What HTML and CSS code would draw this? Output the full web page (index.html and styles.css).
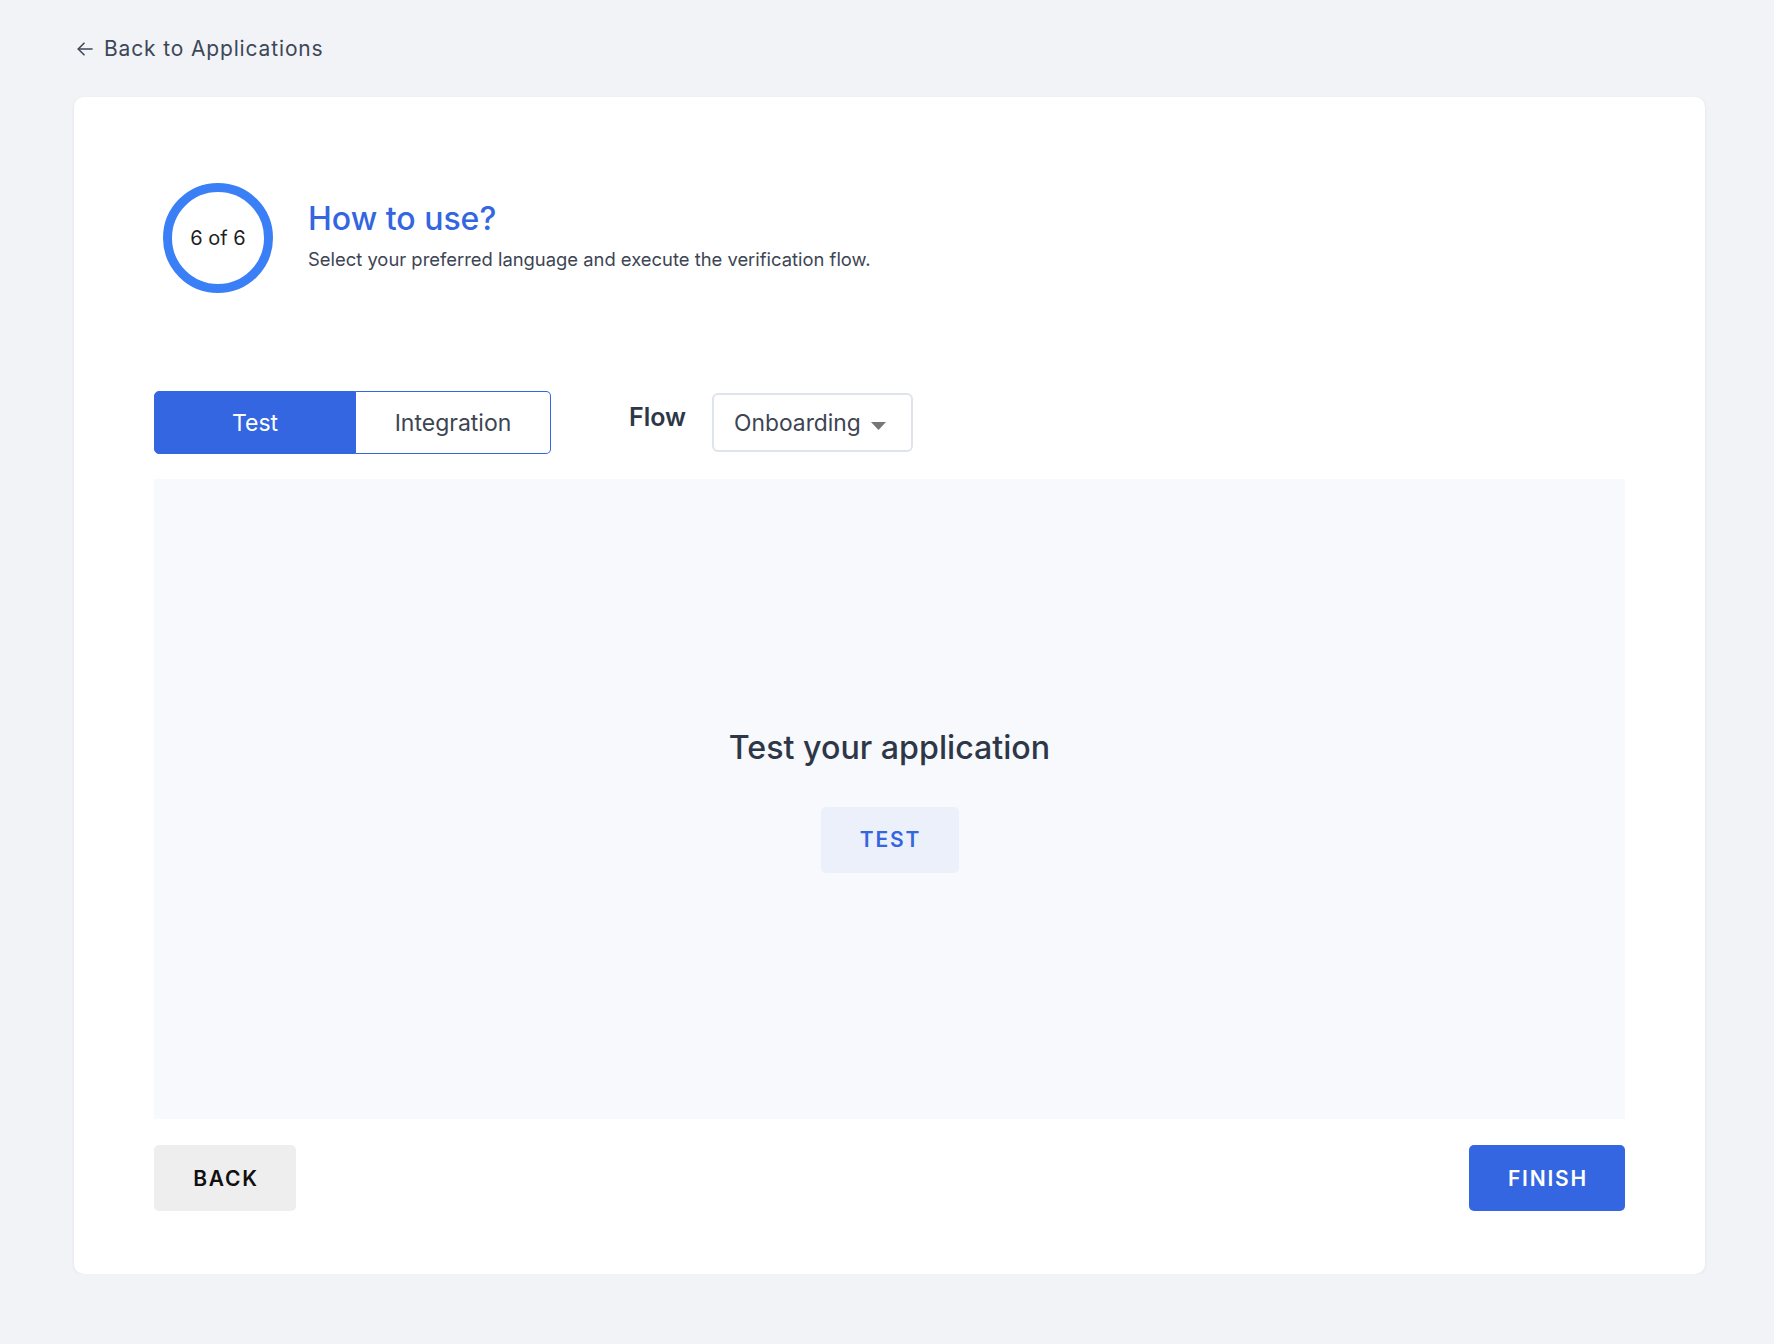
FILE: index.html
```html
<!DOCTYPE html>
<html lang="en">
<head>
<meta charset="utf-8">
<title>How to use?</title>
<link rel="stylesheet" href="styles.css">
</head>
<body>
<div class="page">
  <a class="back-link" href="#">
    <svg class="back-arrow" width="16" height="14" viewBox="0 0 16 14" fill="none" stroke="currentColor" stroke-width="1.6" stroke-linecap="round" stroke-linejoin="round"><path d="M15 7H1.5"/><path d="M7 1.2L1.2 7L7 12.8"/></svg>
    <span>Back to Applications</span>
  </a>
  <main class="card">
    <header class="step-header">
      <div class="step-ring">6 of 6</div>
      <div class="step-text">
        <h1 class="step-title">How to use?</h1>
        <p class="step-sub">Select your preferred language and execute the verification flow.</p>
      </div>
    </header>

    <div class="controls">
      <div class="segmented">
        <button class="seg seg-active">Test</button>
        <button class="seg seg-right">Integration</button>
      </div>
      <span class="flow-label">Flow</span>
      <div class="select">
        <span>Onboarding</span>
        <svg class="caret" width="15" height="8" viewBox="0 0 15 8"><path d="M0 0H15L7.5 8Z" fill="#777"/></svg>
      </div>
    </div>

    <section class="panel">
      <h2 class="panel-title">Test your application</h2>
      <button class="btn btn-soft">TEST</button>
    </section>

    <footer class="footer">
      <button class="btn btn-gray">BACK</button>
      <button class="btn btn-primary">FINISH</button>
    </footer>
  </main>
</div>
</body>
</html>
```

FILE: styles.css
```css
* { box-sizing: border-box; }

html, body {
  margin: 0;
  padding: 0;
  background: #f1f3f7;
  font-family: Inter, "Noto Sans", "Liberation Sans", sans-serif;
  color: #2d3748;
}

.page {
  padding-left: 74px;
  width: 1705px;
}

.back-link {
  display: flex;
  align-items: center;
  height: 97px;
  color: #3d4758;
  text-decoration: none;
  font-size: 21px;
  letter-spacing: 0.85px;
}

.back-arrow {
  margin-left: 3px;
  margin-right: 11px;
  color: #3d4758;
}

.card {
  background: #ffffff;
  border-radius: 10px;
  box-shadow: 0 1px 4px rgba(20, 30, 60, 0.06);
  padding: 86px 80px 63px 80px;
}

.step-header {
  display: flex;
  align-items: flex-start;
}

.step-ring {
  width: 110px;
  height: 110px;
  border: 9px solid #3a7ff5;
  border-radius: 50%;
  display: flex;
  align-items: center;
  justify-content: center;
  margin-left: 9px;
  font-size: 20px;
  color: #1f1f1f;
  flex-shrink: 0;
}

.step-text {
  margin-left: 35px;
  padding-top: 16px;
}

.step-title {
  margin: 0;
  font-size: 32px;
  line-height: 40px;
  font-weight: 500;
  color: #3366e0;
}

.step-sub {
  margin: 7px 0 0 0;
  font-size: 18.4px;
  line-height: 26px;
  color: #3d4553;
}

.controls {
  display: flex;
  align-items: center;
  margin-top: 98px;
  height: 63px;
}

.segmented {
  display: flex;
  height: 63px;
  width: 397px;
}

.seg {
  font-family: inherit;
  font-size: 23px;
  border: 1px solid #3366e0;
  cursor: pointer;
  padding: 0;
}

.seg-active {
  width: 202px;
  background: #3366e0;
  color: #ffffff;
  border-radius: 5px 0 0 5px;
}

.seg-right {
  flex: 1;
  background: #ffffff;
  color: #3d4553;
  border-left: none;
  border-radius: 0 5px 5px 0;
}

.flow-label {
  margin-left: 78px;
  margin-bottom: 12px;
  font-size: 25px;
  font-weight: 600;
  color: #2d3748;
}

.select {
  margin-left: 26px;
  width: 201px;
  height: 59px;
  border: 2px solid #dfe4ec;
  border-radius: 6px;
  display: flex;
  align-items: center;
  padding-left: 20px;
  font-size: 22.8px;
  color: #3d4553;
}

.caret {
  margin-left: 10px;
  margin-top: 6px;
}

.panel {
  margin-top: 25px;
  height: 640px;
  background: #f8f9fd;
  display: flex;
  flex-direction: column;
  align-items: center;
  justify-content: center;
  gap: 37px;
}

.panel-title {
  margin: 0;
  font-size: 32.2px;
  line-height: 44px;
  font-weight: 500;
  color: #2d3748;
}

.btn {
  font-family: inherit;
  font-size: 21px;
  font-weight: 600;
  letter-spacing: 1.8px;
  height: 66px;
  border: none;
  border-radius: 5px;
  cursor: pointer;
  padding: 0;
  text-indent: 2px;
}

.btn-soft {
  width: 138px;
  background: #ebf0fb;
  color: #3366e0;
}

.footer {
  display: flex;
  justify-content: space-between;
  margin-top: 26px;
}

.btn-gray {
  width: 142px;
  background: #eeeeee;
  color: #111111;
}

.btn-primary {
  width: 156px;
  background: #3366e0;
  color: #ffffff;
}
```
